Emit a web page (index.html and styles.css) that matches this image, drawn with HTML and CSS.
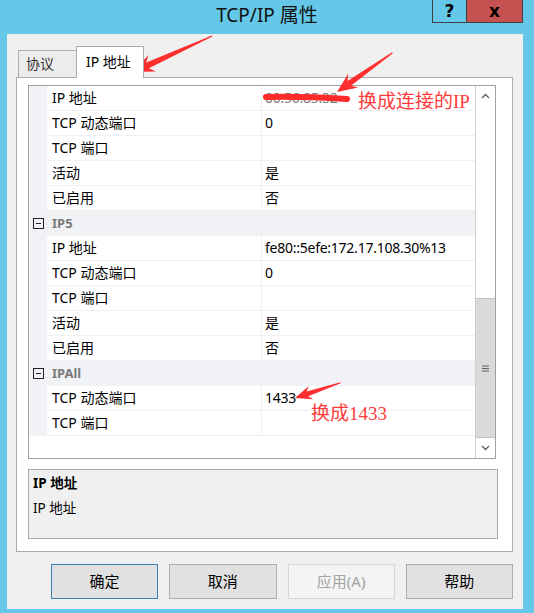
FILE: index.html
```html
<!DOCTYPE html>
<html lang="zh-CN">
  <head>
    <meta charset="UTF-8" />
    <title>TCP/IP 属性</title>
    <link rel="stylesheet" href="styles.css">
  </head>
  <body>
    <div class="window">
      <div class="titlebar">
        <span></span>
        <div class="title">TCP/IP 属性</div>
        <div class="caption">
          <div class="cap help">?</div>
          <div class="cap close">x</div>
        </div>
      </div>

      <div class="dialog">
        <div class="tabs">
          <div class="tab">协议</div>
          <div class="tab active">IP 地址</div>
        </div>

        <div class="panel">
          <div class="grid">
            <div class="rows">
              <div class="row"><div class="gutter"></div><div class="name">IP 地址</div><div class="value hidden-ip">00.56.85.32</div></div>
              <div class="row"><div class="gutter"></div><div class="name">TCP 动态端口</div><div class="value">0</div></div>
              <div class="row"><div class="gutter"></div><div class="name">TCP 端口</div><div class="value"></div></div>
              <div class="row"><div class="gutter"></div><div class="name">活动</div><div class="value">是</div></div>
              <div class="row"><div class="gutter"></div><div class="name">已启用</div><div class="value">否</div></div>

              <div class="row category"><div class="gutter"><span class="toggle"></span></div><div class="cat-name">IP5</div></div>
              <div class="row"><div class="gutter"></div><div class="name">IP 地址</div><div class="value">fe80::5efe:172.17.108.30%13</div></div>
              <div class="row"><div class="gutter"></div><div class="name">TCP 动态端口</div><div class="value">0</div></div>
              <div class="row"><div class="gutter"></div><div class="name">TCP 端口</div><div class="value"></div></div>
              <div class="row"><div class="gutter"></div><div class="name">活动</div><div class="value">是</div></div>
              <div class="row"><div class="gutter"></div><div class="name">已启用</div><div class="value">否</div></div>

              <div class="row category"><div class="gutter"><span class="toggle"></span></div><div class="cat-name">IPAll</div></div>
              <div class="row"><div class="gutter"></div><div class="name">TCP 动态端口</div><div class="value">1433</div></div>
              <div class="row"><div class="gutter"></div><div class="name">TCP 端口</div><div class="value"></div></div>
            </div>

            <div class="scrollbar">
              <div class="sb-btn">
                <svg width="9" height="6" viewBox="0 0 9 6"><path d="M1 5 L4.5 1.5 L8 5" fill="none" stroke="#606060" stroke-width="1.4"/></svg>
              </div>
              <div class="sb-track">
                <div class="sb-thumb">
                  <svg width="9" height="7" viewBox="0 0 9 7"><path d="M1 1 H8 M1 3.5 H8 M1 6 H8" stroke="#606060" stroke-width="1.2"/></svg>
                </div>
              </div>
              <div class="sb-btn">
                <svg width="9" height="6" viewBox="0 0 9 6"><path d="M1 1 L4.5 4.5 L8 1" fill="none" stroke="#606060" stroke-width="1.4"/></svg>
              </div>
            </div>
          </div>

          <div class="desc">
            <div class="desc-title">IP 地址</div>
            <div class="desc-text">IP 地址</div>
          </div>
        </div>

        <div class="buttons">
          <div class="btn default">确定</div>
          <div class="btn">取消</div>
          <div class="btn disabled">应用(A)</div>
          <div class="btn">帮助</div>
        </div>
      </div>

      <!-- red annotations drawn over the screenshot -->
      <svg class="marks" width="534" height="613" viewBox="0 0 534 613">
        <path d="M266 97 Q300 96 347 99" fill="none" stroke="#ff2a2a" stroke-width="6" stroke-linecap="round"/>
        <g fill="#ff2f2f">
          <polygon transform="translate(133 72) rotate(155.5)" points="-87,-0.6 -16,-3.2 -21,-9 0,0 -21,9 -16,3.2 -87,0.6"/>
          <polygon transform="translate(337 92) rotate(144.7)" points="-68,-0.6 -15,-3 -20,-8.5 0,0 -20,8.5 -15,3 -68,0.6"/>
          <polygon transform="translate(295 398) rotate(161.6)" points="-48,-0.5 -13,-2.6 -17,-7 0,0 -17,7 -13,2.6 -48,0.5"/>
        </g>
      </svg>
      <div class="note note-ip">换成连接的IP</div>
      <div class="note note-port">换成1433</div>
    </div>
  </body>
</html>
```

FILE: styles.css
```css
* {
  margin: 0;
  padding: 0;
  box-sizing: border-box;
}
body {
  font-family: "Noto Sans", "Noto Sans CJK SC", sans-serif;
  font-size: 14px;
  color: #000;
}
.window {
  position: relative;
  display: flex;
  flex-direction: column;
  width: 534px;
  height: 613px;
  background: #66c8e8;
  overflow: hidden;
}

/* title bar */
.titlebar {
  display: grid;
  grid-template-columns: 1fr auto 1fr;
  height: 34px;
}
.title {
  font-size: 19px;
  line-height: 30px;
  color: #111;
}
.caption {
  justify-self: end;
  display: flex;
  height: 23px;
  margin-right: 11px;
  border: 1px solid #3f3f3f;
  border-top: none;
}
.cap {
  display: flex;
  align-items: center;
  justify-content: center;
  font-family: "DejaVu Sans", sans-serif;
  font-weight: 700;
  font-size: 17px;
  line-height: 1;
}
.help {
  width: 34px;
  border-right: 1px solid #3f3f3f;
}
.close {
  width: 55px;
  background: #c75050;
}

/* dialog body */
.dialog {
  flex: 1;
  display: flex;
  flex-direction: column;
  margin: 0 11px 4px 7px;
  padding: 12px 10px 10px 9px;
  background: #f0f0f0;
}
.tabs {
  display: flex;
  align-items: flex-end;
  height: 31px;
  padding-left: 2px;
}
.tab {
  height: 27px;
  padding: 0 7px;
  width: 58px;
  line-height: 25px;
  font-size: 14px;
  color: #333;
  background: #ececec;
  border: 1px solid #acacac;
  border-bottom: none;
  border-right: none;
}
.tab.active {
  position: relative;
  z-index: 2;
  width: 68px;
  height: 32px;
  margin-bottom: -1px;
  padding: 0 9px;
  line-height: 30px;
  color: #000;
  background: #fff;
  border-right: 1px solid #acacac;
}
.panel {
  display: flex;
  flex-direction: column;
  padding: 7px 16px 12px 11px;
  background: #fff;
  border: 1px solid #acacac;
}

/* property grid */
.grid {
  display: flex;
  height: 374px;
  border: 1px solid #a0a0a0;
  background: #fff;
}
.rows {
  flex: 1;
}
.row {
  display: flex;
  height: 25px;
  line-height: 24px;
  border-bottom: 1px solid #f0f0f0;
}
.gutter {
  width: 18px;
  display: flex;
  align-items: center;
  justify-content: center;
  background: #f0f2f6;
  margin-bottom: -1px;
}
.name {
  width: 215px;
  padding-left: 5px;
  border-right: 1px solid #f0f0f0;
  white-space: nowrap;
}
.value {
  flex: 1;
  padding-left: 3px;
  white-space: nowrap;
  letter-spacing: -0.25px;
}
.hidden-ip {
  color: #7a7a7a;
}
.row.category {
  background: #f0f2f6;
  border-bottom-color: #f0f2f6;
}
.cat-name {
  padding-left: 5px;
  font-weight: 700;
  font-size: 13px;
  color: #7a7a7a;
}
.toggle {
  position: relative;
  width: 11px;
  height: 11px;
  border: 1px solid #222;
}
.toggle::after {
  content: "";
  position: absolute;
  left: 2px;
  right: 2px;
  top: 4px;
  height: 1px;
  background: #222;
}

/* scrollbar */
.scrollbar {
  display: flex;
  flex-direction: column;
  width: 20px;
  border-left: 1px solid #cdcdcd;
  background: #fff;
}
.sb-btn {
  height: 20px;
  display: flex;
  align-items: center;
  justify-content: center;
}
.sb-track {
  flex: 1;
  display: flex;
  flex-direction: column;
  justify-content: flex-end;
  padding-top: 192px;
}
.sb-thumb {
  flex: 1;
  display: flex;
  align-items: center;
  justify-content: center;
  background: #dadada;
  border: 1px solid #c2c2c2;
  border-left: none;
  border-right: none;
}

/* description box */
.desc {
  height: 70px;
  margin: 10px -2px 0 0;
  padding: 3px 4px;
  background: #f0f0f0;
  border: 1px solid #a9a9a9;
  line-height: 20px;
  font-size: 13.5px;
}
.desc-title {
  font-weight: 700;
}
.desc-text {
  margin-top: 5px;
}

/* buttons */
.buttons {
  display: flex;
  gap: 11px;
  margin-top: 12px;
  padding-left: 35px;
}
.btn {
  width: 108px;
  height: 35px;
  line-height: 33px;
  text-align: center;
  font-size: 15px;
  background: #e1e1e1;
  border: 1px solid #adadad;
}
.btn.default {
  border-color: #3c7fb1;
}
.btn.disabled {
  color: #a3a3a3;
  background: #f4f4f4;
  border-color: #d5d5d5;
}

/* annotations */
.marks {
  position: absolute;
  left: 0;
  top: 0;
  pointer-events: none;
}
.note {
  position: absolute;
  font-family: "Liberation Serif", "Noto Sans CJK SC", serif;
  font-size: 19px;
  line-height: 24px;
  color: #ff3b3b;
  white-space: nowrap;
}
.note-ip {
  left: 358px;
  top: 90px;
}
.note-port {
  left: 311px;
  top: 402px;
}
```
